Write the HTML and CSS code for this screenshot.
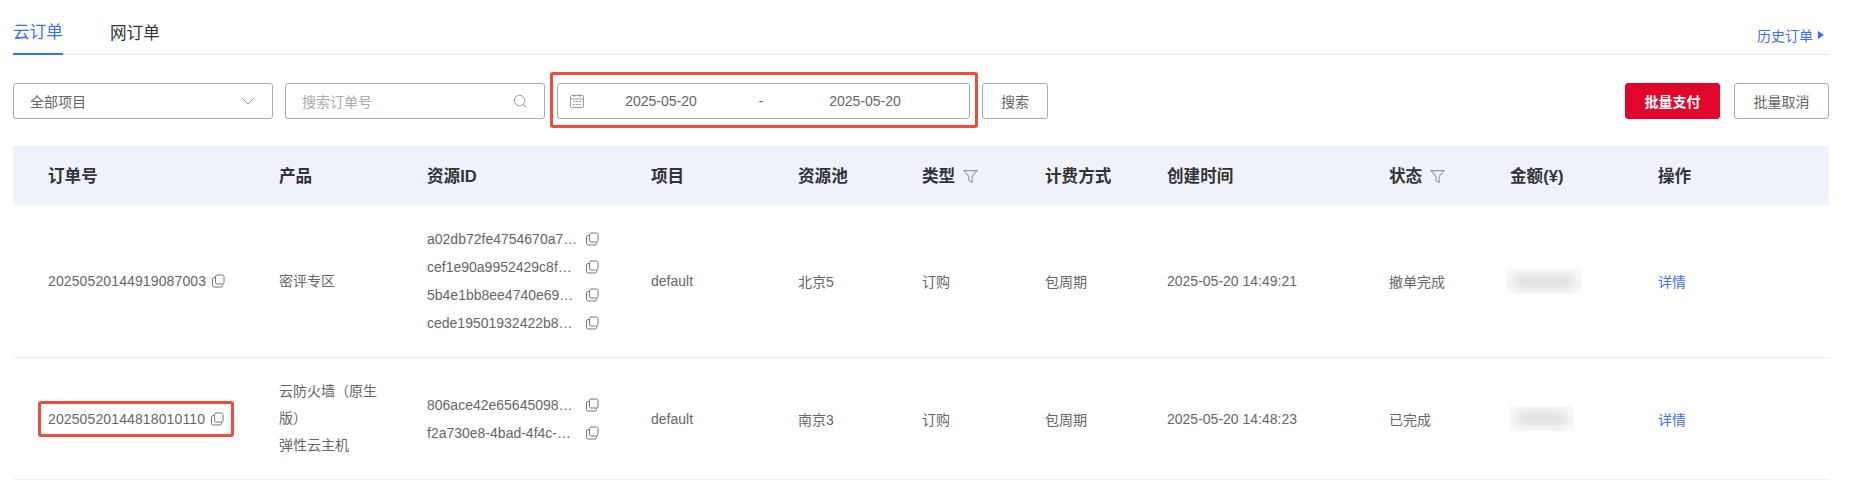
FILE: index.html
```html
<!DOCTYPE html>
<html lang="zh-CN">
<head>
    <meta charset="UTF-8">
    <meta name="viewport" content="width=device-width, initial-scale=1.0">
    <title>订单管理</title>
    <link rel="stylesheet" href="styles.css">
</head>
<body>
    <svg class="sprites" width="0" height="0">
        <symbol id="copy" viewBox="0 0 14 14">
            <rect x="4.5" y="1" width="8.5" height="9" rx="1.5" fill="none" stroke="currentColor"/>
            <path d="M4.5 3.5H3A1.5 1.5 0 0 0 1.5 5v6.5A1.5 1.5 0 0 0 3 13h7a1.5 1.5 0 0 0 1.5-1.5V10" fill="none" stroke="currentColor"/>
        </symbol>
        <symbol id="funnel" viewBox="0 0 14 14">
            <path d="M1 1.5h12L8.5 7v5.5l-3-1.5V7z" fill="none" stroke="currentColor"/>
        </symbol>
    </svg>

    <div class="page">
        <div class="tabs">
            <a class="tab active">云订单</a>
            <a class="tab">网订单</a>
            <a class="history">历史订单<span class="arrow"></span></a>
        </div>

        <div class="toolbar">
            <div class="field select">
                <span>全部项目</span>
                <svg class="icon" width="14" height="14" viewBox="0 0 14 14"><path d="M1 4l6 6 6-6" fill="none" stroke="currentColor"/></svg>
            </div>
            <div class="field search">
                <span>搜索订单号</span>
                <svg class="icon" width="14" height="14" viewBox="0 0 14 14"><circle cx="6.5" cy="6.5" r="5.2" fill="none" stroke="currentColor"/><path d="M10.3 10.3l2.7 2.7" fill="none" stroke="currentColor"/></svg>
            </div>
            <div class="field dates marked">
                <svg class="icon" width="16" height="16" viewBox="0 0 16 16">
                    <rect x="1.5" y="2.5" width="13" height="12" rx="1" fill="none" stroke="currentColor"/>
                    <path d="M1.5 6h13M5 1v3M11 1v3" fill="none" stroke="currentColor"/>
                    <path d="M4 8.5h2M7 8.5h2M10 8.5h2M4 11.5h2M7 11.5h2M10 11.5h2" fill="none" stroke="currentColor"/>
                </svg>
                <span class="date date-from">2025-05-20</span>
                <span class="dash">-</span>
                <span class="date date-to">2025-05-20</span>
            </div>
            <button class="btn">搜索</button>
            <div class="actions">
                <button class="btn btn-primary">批量支付</button>
                <button class="btn btn-wide">批量取消</button>
            </div>
        </div>

        <table class="orders">
            <colgroup>
                <col class="c-order"><col class="c-product"><col class="c-resource"><col class="c-project"><col class="c-pool">
                <col class="c-type"><col class="c-billing"><col class="c-created"><col class="c-status"><col class="c-amount"><col>
            </colgroup>
            <thead>
                <tr>
                    <th>订单号</th>
                    <th>产品</th>
                    <th>资源ID</th>
                    <th>项目</th>
                    <th>资源池</th>
                    <th>类型<svg class="funnel"><use href="#funnel"/></svg></th>
                    <th>计费方式</th>
                    <th>创建时间</th>
                    <th>状态<svg class="funnel"><use href="#funnel"/></svg></th>
                    <th>金额(¥)</th>
                    <th>操作</th>
                </tr>
            </thead>
            <tbody>
                <tr>
                    <td><span class="order-no">20250520144919087003<svg class="copy"><use href="#copy"/></svg></span></td>
                    <td><div class="product">密评专区</div></td>
                    <td>
                        <div class="res"><span class="res-id">a02db72fe4754670a7…</span><svg class="copy"><use href="#copy"/></svg></div>
                        <div class="res"><span class="res-id">cef1e90a9952429c8f…</span><svg class="copy"><use href="#copy"/></svg></div>
                        <div class="res"><span class="res-id">5b4e1bb8ee4740e69…</span><svg class="copy"><use href="#copy"/></svg></div>
                        <div class="res"><span class="res-id">cede19501932422b8…</span><svg class="copy"><use href="#copy"/></svg></div>
                    </td>
                    <td>default</td>
                    <td>北京5</td>
                    <td>订购</td>
                    <td>包周期</td>
                    <td>2025-05-20 14:49:21</td>
                    <td>撤单完成</td>
                    <td><div class="masked masked-long"><i></i></div></td>
                    <td><a class="link">详情</a></td>
                </tr>
                <tr>
                    <td><span class="order-no marked-thin">20250520144818010110<svg class="copy"><use href="#copy"/></svg></span></td>
                    <td><div class="product">云防火墙（原生版）</div><div class="product">弹性云主机</div></td>
                    <td>
                        <div class="res"><span class="res-id">806ace42e65645098…</span><svg class="copy"><use href="#copy"/></svg></div>
                        <div class="res"><span class="res-id">f2a730e8-4bad-4f4c-…</span><svg class="copy"><use href="#copy"/></svg></div>
                    </td>
                    <td>default</td>
                    <td>南京3</td>
                    <td>订购</td>
                    <td>包周期</td>
                    <td>2025-05-20 14:48:23</td>
                    <td>已完成</td>
                    <td><div class="masked masked-short"><i></i></div></td>
                    <td><a class="link">详情</a></td>
                </tr>
            </tbody>
        </table>
    </div>
</body>
</html>
```

FILE: styles.css
```css
body {
    margin: 0;
    font-family: "Liberation Sans", "Noto Sans CJK SC", sans-serif;
    font-size: 14px;
    color: #666;
    background-color: #fff;
}

.sprites {
    position: absolute;
}

.page {
    padding: 0 20px 0 13px;
}

.tabs {
    display: flex;
    align-items: center;
    height: 55px;
    border-bottom: 1px solid #e4e6ee;
    box-sizing: border-box;
}

.tab {
    display: flex;
    align-items: center;
    width: 50px;
    height: 100%;
    margin-right: 47px;
    padding-top: 9px;
    box-sizing: border-box;
    font-size: 16.6px;
    color: #333;
}

.tab.active {
    color: #3d6ff5;
    border-bottom: 2px solid #3d6ff5;
    margin-bottom: -1px;
    height: 55px;
}

.history {
    display: flex;
    align-items: center;
    margin-left: auto;
    margin-right: 5px;
    padding-top: 15px;
    color: #3d6ff5;
}

.arrow {
    margin-left: 5px;
    border-left: 6px solid #3d6ff5;
    border-top: 4.5px solid transparent;
    border-bottom: 4.5px solid transparent;
}

.toolbar {
    display: flex;
    align-items: center;
    margin-top: 28px;
}

.field {
    display: flex;
    align-items: center;
    box-sizing: border-box;
    height: 36px;
    border: 1px solid #a9abb3;
    border-radius: 3px;
}

.select,
.search {
    justify-content: space-between;
    width: 260px;
    padding: 0 17px 0 16px;
    margin-right: 12px;
}

.search {
    color: #aaa;
}

.icon {
    color: #999;
}

.dates {
    position: relative;
    width: 413px;
    margin-right: 12px;
    padding-left: 11px;
}

.marked::after,
.marked-thin::after {
    content: "";
    position: absolute;
    border: 3px solid #f04b3f;
    border-radius: 3px;
    pointer-events: none;
}

.marked::after {
    inset: -12px -9px -10px -8px;
}

.date {
    color: #666;
    text-align: center;
}

.date-from {
    width: 152px;
}

.dash {
    width: 48px;
    text-align: center;
}

.date-to {
    width: 160px;
}

.btn {
    box-sizing: border-box;
    width: 66px;
    height: 36px;
    padding: 0;
    font: inherit;
    color: #666;
    background: #fff;
    border: 1px solid #a9abb3;
    border-radius: 3px;
}

.actions {
    display: flex;
    gap: 14px;
    margin-left: auto;
}

.btn-primary,
.btn-wide {
    width: 95px;
}

.btn-primary {
    color: #fff;
    font-weight: 700;
    background: #e1062c;
    border-color: #e1062c;
}

.orders {
    width: 100%;
    margin-top: 27px;
    border-collapse: collapse;
    table-layout: fixed;
}

.c-order { width: 266px; }
.c-product { width: 148px; }
.c-resource { width: 224px; }
.c-project { width: 147px; }
.c-pool { width: 124px; }
.c-type { width: 123px; }
.c-billing { width: 122px; }
.c-created { width: 222px; }
.c-status { width: 121px; }
.c-amount { width: 148px; }

.orders th {
    height: 59px;
    padding: 0 0 2px;
    box-sizing: border-box;
    font-size: 16.6px;
    font-weight: 600;
    color: #333;
    text-align: left;
    background: #eff2fa;
}

.orders td {
    padding: 20px 0;
    border-bottom: 1px solid #eeeff2;
}

.orders th:first-child {
    padding-left: 35px;
}

.orders td:first-child {
    padding-left: 35px;
}

.funnel {
    width: 15px;
    height: 15px;
    margin-left: 8px;
    vertical-align: -2px;
    color: #999;
}

.order-no {
    display: inline-flex;
    align-items: center;
    gap: 5px;
    letter-spacing: 0.12px;
}

.marked-thin {
    position: relative;
}

.marked-thin::after {
    inset: -10px -10px;
}

.copy {
    flex: none;
    width: 14px;
    height: 14px;
    color: #777;
}

.product {
    width: 110px;
    line-height: 27px;
}

.res {
    display: flex;
    align-items: center;
    gap: 7px;
    height: 28px;
}

.res-id {
    width: 151px;
    white-space: nowrap;
}

.masked {
    height: 25px;
    margin-left: -4px;
    overflow: hidden;
    background: #f9f9f9;
}

.masked i {
    display: block;
    height: 13px;
    margin: 6px 8px;
    background: #dedede;
    filter: blur(5px);
}

.masked-long {
    width: 76px;
}

.masked-short {
    width: 65px;
    margin-left: -1px;
}

.link {
    color: #3d6ff5;
}
```
